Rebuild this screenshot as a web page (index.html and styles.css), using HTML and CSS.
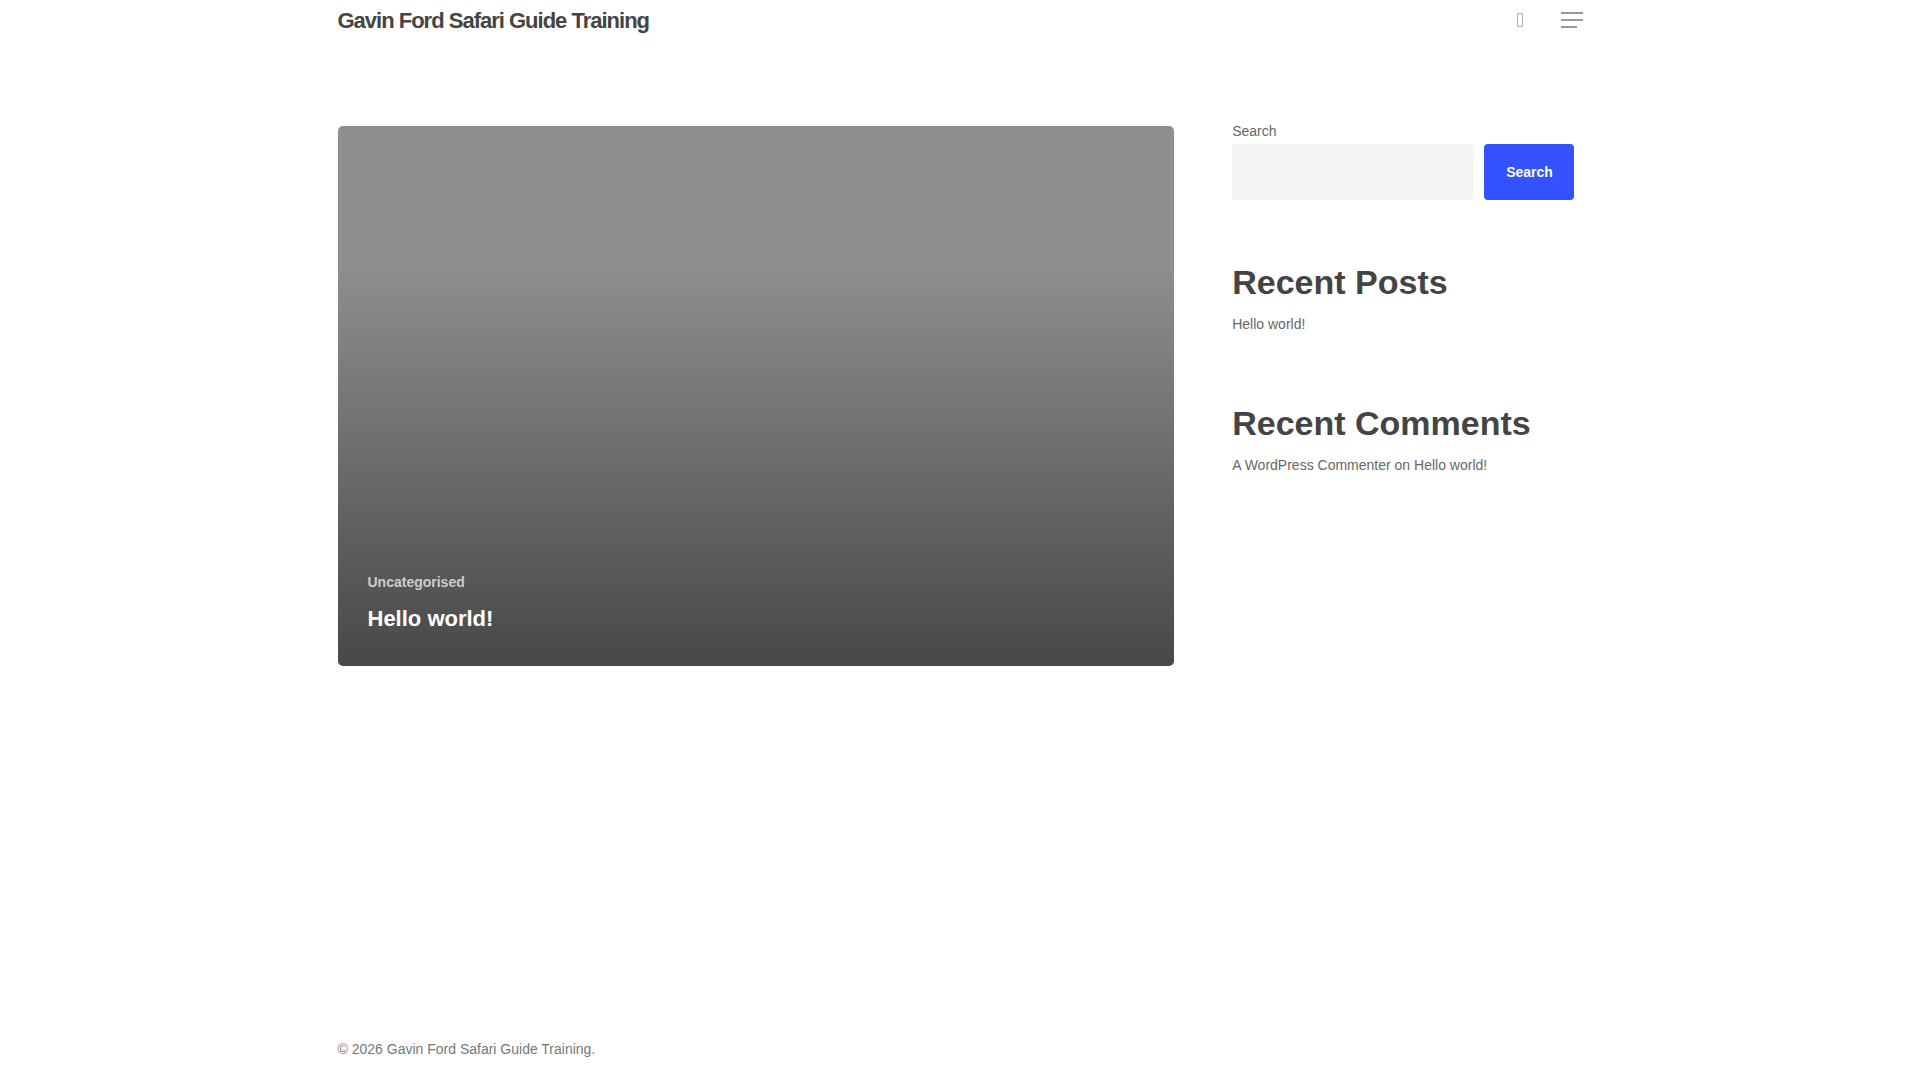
FILE: index.html
```html
<!DOCTYPE html>
<html lang="en">
<head>
<meta charset="utf-8">
<meta name="viewport" content="width=device-width, initial-scale=1">
<title>Gavin Ford Safari Guide Training</title>
<link rel="stylesheet" href="styles.css">
</head>
<body>
<header class="site-header container">
  <a class="brand" href="#">Gavin Ford Safari Guide Training</a>
  <nav class="header-actions" aria-label="Main">
    <button class="icon-button" type="button" aria-label="Search">
      <svg width="6" height="14" viewBox="0 0 6 14" fill="none" stroke="#b0b0b0"><path d="M.5 .5h5v13h-5z"/></svg>
    </button>
    <button class="icon-button" type="button" aria-label="Menu">
      <svg width="22" height="16" viewBox="0 0 22 16" fill="#999"><path d="M0 0h22v2H0zM0 7h22v2H0zM0 14h16v2H0z"/></svg>
    </button>
  </nav>
</header>
<main class="content container">
  <article class="post-card">
    <a class="category" href="#">Uncategorised</a>
    <h3 class="post-title"><a href="#">Hello world!</a></h3>
  </article>
  <aside class="sidebar">
    <form class="widget">
      <label class="search-label" for="search">Search</label>
      <div class="search-row">
        <input class="search-input" id="search" type="search">
        <button class="search-button" type="button">Search</button>
      </div>
    </form>
    <section class="widget">
      <h2 class="widget-title">Recent Posts</h2>
      <p class="entry"><a href="#">Hello world!</a></p>
    </section>
    <section class="widget">
      <h2 class="widget-title">Recent Comments</h2>
      <p class="entry"><a href="#">A WordPress Commenter</a> on <a href="#">Hello world!</a></p>
    </section>
  </aside>
</main>
<footer class="site-footer container">
  <p class="copyright">© 2026 Gavin Ford Safari Guide Training.</p>
</footer>
</body>
</html>
```

FILE: styles.css
```css
* {
  box-sizing: border-box;
}

body {
  display: flex;
  flex-direction: column;
  min-height: 100vh;
  margin: 0;
  background: #fff;
  color: #676767;
  font: 14px/24px "Liberation Sans", Arial, sans-serif;
}

a {
  color: inherit;
  text-decoration: none;
}

h2, h3, p {
  margin: 0;
}

.container {
  width: 100%;
  max-width: 1293px;
  margin: 0 auto;
  padding: 0 24px;
}

.site-header {
  display: flex;
  align-items: center;
  justify-content: space-between;
  height: 40px;
}

.brand {
  padding-top: 2px;
  color: #444;
  font-size: 22px;
  font-weight: bold;
  letter-spacing: -1px;
}

.header-actions {
  display: flex;
  align-items: center;
  gap: 38px;
}

.icon-button {
  display: flex;
  padding: 0;
  border: 0;
  background: none;
  cursor: pointer;
}

.content {
  display: grid;
  grid-template-columns: minmax(0, 836fr) minmax(0, 342fr);
  column-gap: 58px;
  align-items: start;
  flex: 1;
  padding: 80px 32px 48px 24px;
}

.post-card {
  display: flex;
  flex-direction: column;
  justify-content: flex-end;
  align-items: flex-start;
  gap: 8px;
  min-height: 540px;
  margin-top: 6px;
  padding: 30px;
  border-radius: 5px;
  background: linear-gradient(#8f8f8f 25%, #484848);
}

.category {
  color: #ccc;
  font-weight: bold;
}

.post-title {
  color: #fff;
  font-size: 22px;
  line-height: 34px;
}

.sidebar {
  display: grid;
  gap: 60px;
}

.search-label {
  display: block;
  margin-bottom: 2px;
  line-height: 22px;
}

.search-row {
  display: flex;
  gap: 10px;
}

.search-input {
  flex: 1;
  min-width: 0;
  height: 56px;
  padding: 0 16px;
  border: 0;
  border-radius: 4px;
  background: #f5f5f5;
  color: inherit;
  font: inherit;
}

.search-button {
  width: 90px;
  height: 56px;
  padding: 0;
  border: 0;
  border-radius: 4px;
  background: #3452ff;
  color: #fff;
  font: bold 14px/24px "Liberation Sans", Arial, sans-serif;
  cursor: pointer;
}

.widget-title {
  margin-bottom: 8px;
  color: #444;
  font-size: 34px;
  line-height: 44px;
}

.entry {
  margin-bottom: 5px;
}

.site-footer {
  padding-bottom: 19px;
  color: #777;
}

@media (max-width: 900px) {
  .content {
    grid-template-columns: minmax(0, 1fr);
    row-gap: 48px;
    padding-right: 24px;
  }
}
```
